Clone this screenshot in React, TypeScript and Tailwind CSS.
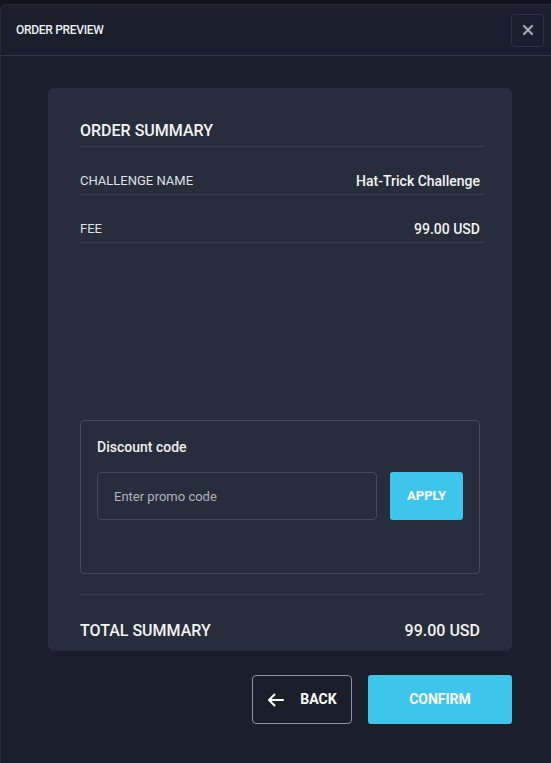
import React from 'react';

const font = { fontFamily: 'Roboto, "Liberation Sans", sans-serif' };

const SummaryRow: React.FC<{ label: string; value: string }> = ({ label, value }) => (
  <div className="flex h-12 items-end justify-between border-b border-[#3a4050] pb-[3px] pr-1">
    <span className="text-[13px] leading-5 text-[#dfe2e8]">{label}</span>
    <span className="text-[14px] font-medium leading-5 text-[#f1f3f6]">{value}</span>
  </div>
);

export default function App() {
  return (
    <div className="min-h-[763px] w-full bg-[#10131b] pt-1" style={font}>
      <div className="flex min-h-[759px] flex-col rounded-tl-md border-l border-t border-[#272c38] bg-[#1a1f2b]">
        {/* header */}
        <div className="flex h-[51px] items-center justify-between border-b border-[#323846] pl-[15px] pr-[7px]">
          <h1 className="text-[12px] font-medium tracking-tight text-[#eef0f4]">ORDER PREVIEW</h1>
          <button className="flex h-[33px] w-[33px] items-center justify-center rounded-[4px] border border-[#2e3443] text-[#a4a9b5]">
            <svg width="12" height="12" viewBox="0 0 12 12" fill="none">
              <path d="M2 2l8 8M10 2l-8 8" stroke="currentColor" strokeWidth="2.2" strokeLinecap="round" />
            </svg>
          </button>
        </div>

        <div className="pl-[47px] pr-[39px] pt-8">
          {/* card */}
          <div className="flex h-[563px] flex-col rounded-md bg-[#282d3b] pl-8 pr-7 pt-[31px]">
            <div className="border-b border-[#3a4050] pb-[3px]">
              <h2 className="text-[16px] font-medium leading-6 text-[#f1f3f6]">ORDER SUMMARY</h2>
            </div>
            <SummaryRow label="CHALLENGE NAME" value="Hat-Trick Challenge" />
            <SummaryRow label="FEE" value="99.00 USD" />

            <div className="mt-auto mr-1 rounded-[4px] border border-[#444b5b] px-4 pb-[53px] pt-4">
              <p className="text-[14px] font-medium leading-5 text-[#eef0f4]">Discount code</p>
              <div className="mt-[15px] flex gap-[13px]">
                <input
                  className="h-12 flex-1 rounded-[4px] border border-[#444b5b] bg-transparent px-4 text-[13px] text-[#eef0f4] outline-none placeholder:text-[#aeb3bd]"
                  placeholder="Enter promo code"
                />
                <button className="h-12 w-[73px] rounded-[3px] bg-[#3ec5ec] text-[13px] font-bold text-white">APPLY</button>
              </div>
            </div>

            <div className="mt-5 border-t border-[#3a4050] pb-2 pt-6">
              <div className="flex items-center justify-between pr-1">
                <span className="text-[16px] font-medium leading-6 text-[#f1f3f6]">TOTAL SUMMARY</span>
                <span className="text-[16px] font-medium leading-6 text-[#f1f3f6]">99.00 USD</span>
              </div>
            </div>
          </div>

          {/* actions */}
          <div className="mt-6 flex justify-end gap-4">
            <button className="flex h-[49px] w-[100px] items-center justify-center gap-4 rounded-[4px] border border-[#8c919c] text-[14px] font-bold text-white">
              <svg width="17" height="14" viewBox="0 0 17 14" fill="none">
                <path d="M16 7H2M7.5 1.5L2 7l5.5 5.5" stroke="currentColor" strokeWidth="2" strokeLinecap="round" strokeLinejoin="round" />
              </svg>
              BACK
            </button>
            <button className="h-[49px] w-[144px] rounded-[3px] bg-[#3ec5ec] text-[14px] font-bold text-white">CONFIRM</button>
          </div>
        </div>
      </div>
    </div>
  );
}
